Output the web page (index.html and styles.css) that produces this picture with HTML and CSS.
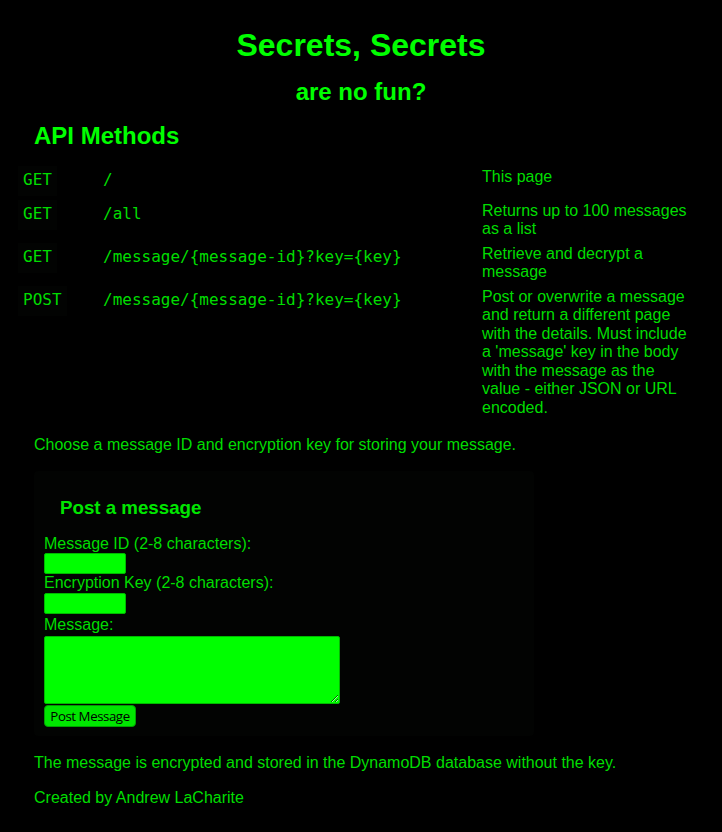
FILE: index.html
```html
<!DOCTYPE html>
<html lang="en">
<head>
<meta charset="utf-8">
<title>Secrets, Secrets</title>
<link rel="stylesheet" href="styles.css">
</head>
<body>
<main class="page">
  <h1 class="title">Secrets, Secrets</h1>
  <h2 class="subtitle">are no fun?</h2>
  <h2 class="section-title">API Methods</h2>
  <div class="api">
    <code class="method">GET</code><code class="path">/</code><div class="desc">This page</div>
    <code class="method">GET</code><code class="path">/all</code><div class="desc">Returns up to 100 messages as a list</div>
    <code class="method">GET</code><code class="path">/message/{message-id}?key={key}</code><div class="desc">Retrieve and decrypt a message</div>
    <code class="method">POST</code><code class="path">/message/{message-id}?key={key}</code><div class="desc">Post or overwrite a message and return a different page with the details. Must include a 'message' key in the body with the message as the value - either JSON or URL encoded.</div>
  </div>
  <p class="intro">Choose a message ID and encryption key for storing your message.</p>
  <form class="post-box">
    <h3 class="box-title">Post a message</h3>
    <label class="field-label" for="mid">Message ID (2-8 characters):</label>
    <input class="field" id="mid" type="text">
    <label class="field-label" for="key">Encryption Key (2-8 characters):</label>
    <input class="field" id="key" type="text">
    <label class="field-label msg-label" for="msg">Message:</label>
    <textarea class="message" id="msg"></textarea>
    <button class="submit" type="button">Post Message</button>
  </form>
  <p class="note">The message is encrypted and stored in the DynamoDB database without the key.</p>
  <p class="credit">Created by Andrew LaCharite</p>
</main>
</body>
</html>
```

FILE: styles.css
```css
html, body {
  margin: 0;
  padding: 0;
  background: #000;
}

body {
  font-family: "Liberation Sans", Arial, sans-serif;
  font-size: 16px;
  color: #00dd00;
}

.page {
  display: flex;
  flex-direction: column;
  align-items: flex-start;
  padding: 0 0 0 34px;
}

.title {
  align-self: stretch;
  margin: 27px 0 0 -34px;
  font-size: 32px;
  line-height: 36.8px;
  font-weight: bold;
  text-align: center;
  color: #00ff00;
}

.subtitle {
  align-self: stretch;
  margin: 14.5px 0 0 -34px;
  font-size: 24px;
  line-height: 27.6px;
  font-weight: bold;
  text-align: center;
  color: #00ff00;
}

.section-title {
  margin: 16.5px 0 0 0;
  font-size: 24px;
  line-height: 27.6px;
  font-weight: bold;
  color: #00ff00;
}

.api {
  display: grid;
  grid-template-columns: 85px 379px 210px;
  row-gap: 4px;
  align-items: start;
  margin: 16px 0 0 -16px;
}

.method,
.path {
  font-family: "DejaVu Sans Mono", monospace;
  font-size: 16px;
  line-height: 18px;
  padding: 5px 5px 7px;
  color: #00dd00;
  justify-self: start;
}

.method {
  background: #020302;
}

.path {
  padding-left: 0;
}

.desc {
  padding-top: 2px;
  line-height: 18.5px;
}

.intro {
  margin: 18.5px 0 0 0;
  line-height: 18.4px;
}

.post-box {
  display: flex;
  flex-direction: column;
  align-items: flex-start;
  box-sizing: border-box;
  width: 500px;
  margin: 16.3px 0 0 0;
  padding: 26.4px 10px 9.5px 10px;
  background: #020302;
  border-radius: 4px;
}

.box-title {
  margin: 0 0 16px 16px;
  font-size: 18.72px;
  line-height: 21.5px;
  font-weight: bold;
  color: #00e600;
}

.field-label {
  line-height: 18.6px;
}

.msg-label {
  margin-top: 2px;
}

.field {
  box-sizing: border-box;
  width: 82px;
  height: 21px;
  margin: 0;
  padding: 1px 2px;
  background: #00ff00;
  border: 1px solid #00b800;
  border-radius: 2px;
  outline: none;
}

.message {
  box-sizing: border-box;
  width: 296px;
  height: 68px;
  margin: 1.5px 0 0 0;
  padding: 2px;
  background: #00ff00;
  border: 1px solid #00b800;
  border-radius: 2px;
  outline: none;
}

.submit {
  box-sizing: border-box;
  width: 92px;
  height: 21.5px;
  margin: 1.5px 0 0 0;
  padding: 0 2px;
  white-space: nowrap;
  font-family: "Open Sans", "DejaVu Sans", sans-serif;
  font-size: 13.3px;
  letter-spacing: -0.45px;
  color: #000;
  background: #00e600;
  border: 1px solid #00a000;
  border-radius: 4px;
}

.note {
  margin: 17.5px 0 0 0;
  line-height: 18.4px;
}

.credit {
  margin: 16.6px 0 0 0;
  line-height: 18.4px;
}
```
